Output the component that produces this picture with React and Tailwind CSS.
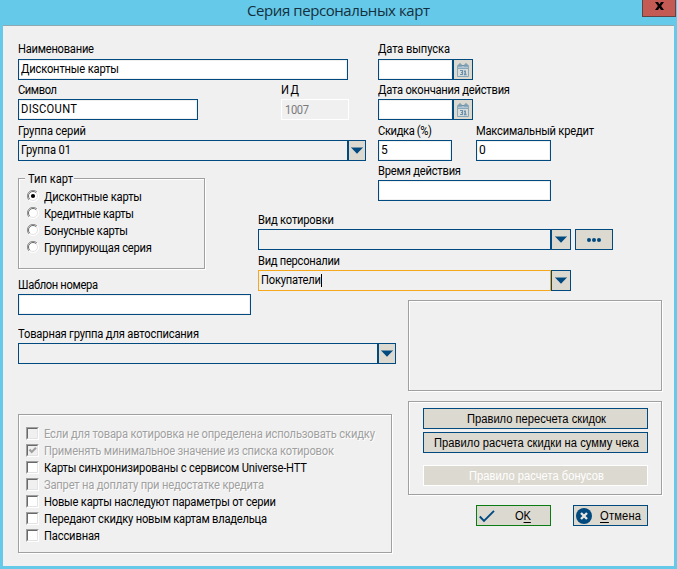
import { useLayoutEffect, useRef } from 'react';

// Slightly condensed text run, spaced out so that it fills exactly w pixels.
const CONDENSE = 0.93;

function Fit({ w, plain = false, children }) {
  const ref = useRef(null);
  useLayoutEffect(() => {
    const el = ref.current;
    el.style.letterSpacing = '0px';
    const scale = plain ? 1 : CONDENSE;
    const natural = el.getBoundingClientRect().width / scale;
    const count = el.textContent.length;
    const spacing = (w / scale - natural) / Math.max(count - 1, 1);
    el.style.letterSpacing = `${spacing}px`;
    el.style.marginRight = `${w - (natural + spacing * count)}px`;
  }, [w, plain]);
  return (
    <span
      ref={ref}
      className={`inline-block origin-left whitespace-pre ${plain ? '' : 'scale-x-[0.93]'}`}
    >
      {children}
    </span>
  );
}

function Label({ w, children }) {
  return (
    <div className="flex h-[15px] items-center leading-[15px]">
      <Fit w={w + 1}>{children}</Fit>
    </div>
  );
}

function Box({ className = '', children }) {
  return (
    <div
      className={`flex h-[21px] shrink-0 items-center border border-[#004a80] bg-white pl-[2px] leading-[19px] shadow-[inset_0_0_0_1px_#f0f0f0] ${className}`}
    >
      {children}
    </div>
  );
}

function Arrow({ className = 'w-5' }) {
  return (
    <div className={`flex h-[21px] shrink-0 items-center justify-center border border-[#004a80] bg-[#dcd9d0] ${className}`}>
      <svg width="12" height="7" viewBox="0 0 12 7">
        <path d="M0 .5h12L6 6.8z" fill="#004a80" />
        <path d="M0 .5h12" stroke="#7295aa" />
      </svg>
    </div>
  );
}

function Combo({ className, arrow, focused, children }) {
  return (
    <div className="flex">
      <div
        className={`flex h-[21px] shrink-0 items-center border bg-[#f0f0f0] pl-[2px] leading-[19px] ${focused ? 'border-[#f5a81c]' : 'border-[#004a80]'} ${className}`}
      >
        {children}
      </div>
      <Arrow className={arrow} />
    </div>
  );
}

function DateField() {
  return (
    <div className="flex">
      <Box className="w-[75px]" />
      <div className="flex h-[21px] w-5 items-center justify-center border border-[#004a80] bg-[#dcd9d0]">
        <svg width="12" height="14" viewBox="0 0 12 14" fill="none">
          <path d="M.5 2.5h11v11H.5z" fill="#d8dcdb" stroke="#8aa8bb" />
          <path d="M1 3h10v2H1z" fill="#b3c5d0" />
          <path d="M0 5.5h12" stroke="#8aa8bb" />
          <path d="M2 4V1h2v3M8 4V1h2v3M5 2.5h2" stroke="#6a90ac" />
          <path d="M3 7.5h2.5v4H3M4 9.5h2" stroke="#6a90ac" strokeWidth="1.2" />
          <path d="M7 8.2h1.2v3.5M7 11.5h2.5" stroke="#6a90ac" strokeWidth="1.4" />
        </svg>
      </div>
    </div>
  );
}

function Radio({ w, checked, children }) {
  return (
    <div className="flex h-[17px] items-start">
      <svg className="shrink-0" width="12" height="12" viewBox="0 0 12 12" fill="none">
        <circle cx="6" cy="6" r="5.2" fill="#fff" />
        <path d="M2 10A5.5 5.5 0 0 1 10 2" stroke="#8d8d8d" />
        <path d="M2.8 9.2A4.5 4.5 0 0 1 9.2 2.8" stroke="#696969" />
        <path d="M10 2A5.5 5.5 0 0 1 2 10" stroke="#fff" />
        <path d="M9.2 2.8A4.5 4.5 0 0 1 2.8 9.2" stroke="#e3e3e3" />
        {checked && <circle cx="6" cy="6" r="2.1" fill="#000" />}
      </svg>
      <span className="ml-[5px] flex leading-[15px]">
        <Fit w={w + 1}>{children}</Fit>
      </span>
    </div>
  );
}

function Check({ w, checked, disabled, children }) {
  return (
    <div className="flex h-[17px] items-start">
      <div
        className={`size-[13px] shrink-0 border border-t-[#a0a0a0] border-r-white border-b-white border-l-[#a0a0a0] ${disabled ? 'bg-[#f0f0f0]' : 'bg-white'}`}
      >
        <svg className="block" width="11" height="11" viewBox="0 0 11 11" fill="none">
          <path d="M0 .5h10.5M.5 0v10.5" stroke="#696969" />
          <path d="M10.5 1v9.5H1" stroke="#e3e3e3" />
          {checked && <path d="M2.5 4.5 4.7 7 9 2.7" stroke="#a0a0a0" strokeWidth="2.2" />}
        </svg>
      </div>
      <span
        className={`ml-[5px] flex leading-[15px] ${disabled ? 'text-[#a0a0a0] [text-shadow:1px_1px_0_#fff]' : ''}`}
      >
        <Fit w={w + 1}>{children}</Fit>
      </span>
    </div>
  );
}

function Panel({ className, children }) {
  return (
    <div
      className={`border border-[#a0a0a0] shadow-[inset_1px_1px_0_#fff,1px_1px_0_#fff] ${className}`}
    >
      {children}
    </div>
  );
}

function Button({ className, children }) {
  return (
    <div
      className={`flex h-[21px] items-center border bg-[#dcd9d0] pt-px font-['Liberation_Sans',sans-serif] leading-[18px] ${className}`}
    >
      {children}
    </div>
  );
}

export default function App() {
  return (
    <div className="flex h-[569px] w-[677px] flex-col overflow-hidden bg-[#65c9ea] font-[Roboto,sans-serif] text-[12px] text-black">
      <header className="flex h-[25px] shrink-0 items-start">
        <h1 className="w-[642px] pl-[247px] font-['Open_Sans',sans-serif] text-[15px] leading-[21px] text-[#15303c]">
          <Fit w={183} plain>Серия персональных карт</Fit>
        </h1>
        <div className="flex h-[17px] w-[34px] items-start justify-center border border-t-0 border-[#5f4446] bg-[#c45a54] pt-[2px]">
          <svg width="9" height="8" viewBox="0 0 9 8">
            <path d="M0 0h3l1.5 2.3L6 0h3L6.1 4 9 8H6L4.5 5.7 3 8H0l2.9-4z" fill="#000" />
          </svg>
        </div>
      </header>

      <main className="mr-[3px] ml-[3px] h-[541px] border-t border-[#8fa9b3] bg-[#f0f0f0] pl-[15px]">
        <section className="flex h-[135px] pt-4">
          <div className="w-[360px] shrink-0">
            <Label w={75}>Наименование</Label>
            <Box className="mt-[2px] w-[330px]">
              <Fit w={98}>Дисконтные карты</Fit>
            </Box>
            <div className="mt-[3px] flex">
              <div className="w-[263px]">
                <Label w={38}>Символ</Label>
                <Box className="mt-px w-[180px]">
                  <Fit w={56}>DISCOUNT</Fit>
                </Box>
              </div>
              <div>
                <Label w={17}>ИД</Label>
                <div className="mt-px flex h-[21px] w-[68px] items-center border border-white pl-[3px] text-[#7a7a7a]">
                  <Fit w={24}>1007</Fit>
                </div>
              </div>
            </div>
            <div className="mt-1 mb-px">
              <Label w={67}>Группа серий</Label>
            </div>
            <Combo className="w-[330px]" arrow="w-[18px]">
              <Fit w={50}>Группа 01</Fit>
            </Combo>
          </div>
          <div>
            <Label w={71}>Дата выпуска</Label>
            <div className="mt-[2px]">
              <DateField />
            </div>
            <div className="mt-[3px] mb-px">
              <Label w={131}>Дата окончания действия</Label>
            </div>
            <DateField />
            <div className="mt-1 flex">
              <div className="w-[98px]">
                <Label w={53}>Скидка (%)</Label>
                <Box className="mt-px w-[74px]">5</Box>
              </div>
              <div>
                <Label w={117}>Максимальный кредит</Label>
                <Box className="mt-px w-[75px]">0</Box>
              </div>
            </div>
          </div>
        </section>

        <section className="flex h-[154px]">
          <div className="w-[240px] pt-[10px]">
            <fieldset className="h-[98px]">
              <div className="relative mt-[7px] h-[91px] w-[187px] border border-[#a0a0a0] shadow-[inset_1px_1px_0_#fff,1px_1px_0_#fff]">
                <legend className="absolute -top-[7px] left-[6px] w-[49px] bg-[#f0f0f0] pl-[3px] leading-[15px]">
                  <Fit w={45}>Тип карт</Fit>
                </legend>
                <div className="pt-[11px] pl-[8px]">
                  <Radio w={97} checked>Дисконтные карты</Radio>
                  <Radio w={89}>Кредитные карты</Radio>
                  <Radio w={83}>Бонусные карты</Radio>
                  <Radio w={107}>Группирующая серия</Radio>
                </div>
              </div>
            </fieldset>
            <div className="mt-[9px]">
              <Label w={79}>Шаблон номера</Label>
              <Box className="mt-px w-[233px]" />
            </div>
          </div>
          <div className="pt-[3px]">
            <div className="ml-[120px]">
              <Label w={82}>Время действия</Label>
              <Box className="mt-px w-[173px]" />
            </div>
            <div className="mt-3 mb-px">
              <Label w={75}>Вид котировки</Label>
            </div>
            <div className="flex gap-1">
              <Combo className="w-[293px]" />
              <div className="flex h-[21px] w-[38px] items-center justify-center gap-[1.4px] border border-[#004a80] bg-[#dcd9d0]">
                <i className="size-1 rounded-full bg-[#004a80]" />
                <i className="size-1 rounded-full bg-[#004a80]" />
                <i className="size-1 rounded-full bg-[#004a80]" />
              </div>
            </div>
            <div className="mt-1 mb-px">
              <Label w={81}>Вид персоналии</Label>
            </div>
            <Combo className="w-[293px]" focused>
              <Fit w={60}>Покупатели</Fit>
              <span className="h-[13px] w-px bg-black" />
            </Combo>
          </div>
        </section>

        <section className="flex">
          <div className="w-[390px] shrink-0 pt-3">
            <div className="mb-px">
              <Label w={180}>Товарная группа для автосписания</Label>
            </div>
            <Combo className="w-[360px]" arrow="w-[18px]" />
            <Panel className="mt-[50px] h-[139px] w-[374px] pt-3 pl-[7px]">
              <Check w={330} disabled>Если для товара котировка не определена использовать скидку</Check>
              <Check w={289} disabled checked>Применять минимальное значение из списка котировок</Check>
              <Check w={262}>Карты синхронизированы с сервисом Universe-HTT</Check>
              <Check w={219} disabled>Запрет на доплату при недостатке кредита</Check>
              <Check w={231}>Новые карты наследуют параметры от серии</Check>
              <Check w={222}>Передают скидку новым картам владельца</Check>
              <Check w={55}>Пассивная</Check>
            </Panel>
          </div>
          <div className="-mt-[15px] w-[254px]">
            <Panel className="h-[91px]" />
            <Panel className="mt-[10px] h-[94px] pt-[6px] pr-[13px] pl-[14px]">
              <Button className="justify-center border-[#004a80] pl-[2px]">
                <Fit w={139}>Правило пересчета скидок</Fit>
              </Button>
              <Button className="mt-[3px] justify-center border-[#004a80] pl-[2px]">
                <Fit w={205}>Правило расчета скидки на сумму чека</Fit>
              </Button>
              <Button className="mt-3 justify-center border-white pl-[2px] text-white">
                <Fit w={135}>Правило расчета бонусов</Fit>
              </Button>
            </Panel>
            <div className="mt-[10px] ml-[68px] flex gap-[22px]">
              <Button className="w-[75px] border-[#0a7d12] pl-[2px]">
                <svg width="16" height="13" viewBox="0 0 16 13" fill="none">
                  <path d="M.8 6.5 5 11 15 .8" stroke="#004a80" strokeWidth="1.9" />
                </svg>
                <span className="ml-[20px] flex">
                  <Fit w={16}>O<u className="underline-offset-2">K</u></Fit>
                </span>
              </Button>
              <Button className="w-[75px] border-[#004a80] pl-[2px]">
                <svg className="-mt-px" width="16" height="16" viewBox="0 0 16 16" fill="none">
                  <circle cx="8" cy="8" r="8" fill="#004a80" />
                  <path d="m5 5 6 6M11 5l-6 6" stroke="#e8e6df" strokeWidth="2.4" />
                </svg>
                <span className="ml-[8px] flex">
                  <Fit w={41}><u className="underline-offset-2">О</u>тмена</Fit>
                </span>
              </Button>
            </div>
          </div>
        </section>
      </main>
    </div>
  );
}
